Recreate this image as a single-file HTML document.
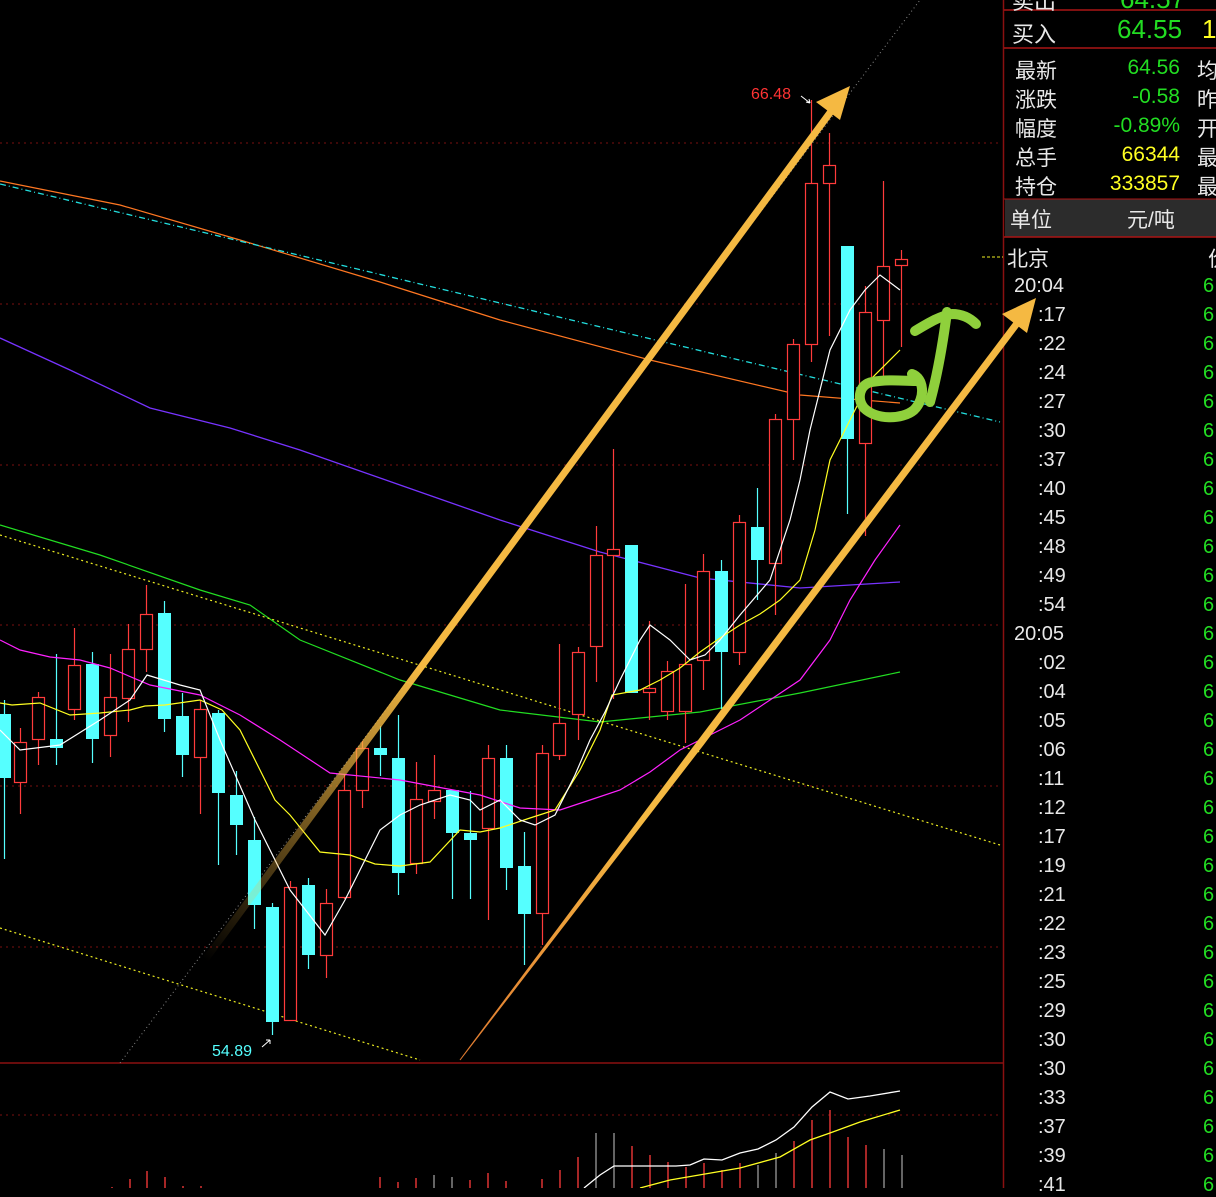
<!DOCTYPE html>
<html><head><meta charset="utf-8"><style>
html,body{margin:0;padding:0;background:#000;width:1216px;height:1188px;overflow:hidden}
svg{position:absolute;left:0;top:0}
.p{position:absolute;font-family:"Liberation Sans","Noto Sans CJK SC",sans-serif;white-space:nowrap}
.l{color:#e8e8e8;font-size:21px}
.v{font-size:21px;text-align:right;width:120px;left:1060px}
.g{color:#22dd22}.y{color:#ffff22}
.t{color:#e8e8e8;font-size:20px;left:1038px}
.s{color:#22dd22;font-size:20px;left:1203px}
</style></head><body>
<svg width="1216" height="1188" viewBox="0 0 1216 1188" xmlns="http://www.w3.org/2000/svg">
<g stroke="#7a1010" stroke-width="1" stroke-dasharray="2,4">
<line x1="0" y1="143" x2="1000" y2="143"/><line x1="0" y1="304" x2="1000" y2="304"/><line x1="0" y1="465" x2="1000" y2="465"/><line x1="0" y1="625" x2="1000" y2="625"/><line x1="0" y1="786" x2="1000" y2="786"/><line x1="0" y1="947" x2="1000" y2="947"/><line x1="0" y1="1115" x2="1000" y2="1115"/>
</g>
<line x1="0" y1="1063" x2="1003" y2="1063" stroke="#8a1010" stroke-width="1.5"/>
<line x1="1003.5" y1="0" x2="1003.5" y2="1188" stroke="#8a1010" stroke-width="1.5"/>
<line x1="120" y1="1063" x2="920" y2="0" stroke="#888" stroke-width="1" stroke-dasharray="1,3"/>
<polyline fill="none" stroke="#ff7722" stroke-width="1.2" points="0,181 120,205 240,240 380,282 500,320 650,360 800,395 900,403"/>
<line x1="0" y1="184" x2="1000" y2="422" stroke="#22dddd" stroke-width="1.3" stroke-dasharray="6,3,1,3"/>
<polyline fill="none" stroke="#7733ff" stroke-width="1.3" points="0,338 70,370 150,408 230,428 300,450 400,485 500,520 600,552 700,578 800,588 900,582"/>
<polyline fill="none" stroke="#22dd22" stroke-width="1.2" points="0,525 100,555 200,590 250,605 300,640 400,680 500,710 600,722 700,712 800,693 900,672"/>
<line x1="0" y1="535" x2="1000" y2="845" stroke="#eeee22" stroke-width="1.2" stroke-dasharray="2,3"/>
<line x1="0" y1="928" x2="420" y2="1060" stroke="#eeee22" stroke-width="1.2" stroke-dasharray="2,3"/>
<g id="c"></g>
<polyline fill="none" stroke="#ff22ff" stroke-width="1.2" points="0,640 20,650 50,657 80,660 110,668 150,685 200,695 240,715 280,740 330,773 400,780 480,795 520,808 560,810 590,800 620,790 650,772 680,750 710,735 740,720 770,700 800,680 830,640 850,600 875,560 900,525"/>
<polyline fill="none" stroke="#ffff22" stroke-width="1.2" points="0,703 12,705 40,703 70,715 100,713 130,710 145,706 165,705 200,700 222,710 240,730 275,800 290,815 320,852 350,855 375,864 400,866 430,862 460,830 480,832 500,828 530,818 555,810 580,770 600,730 612,695 640,690 660,680 680,668 700,652 720,638 740,625 760,614 780,600 800,580 815,530 830,460 850,420 870,380 900,350"/>
<polyline fill="none" stroke="#ffffff" stroke-width="1.2" points="0,730 20,750 60,745 100,720 130,700 147,675 180,685 200,690 220,740 255,820 290,890 325,935 345,900 365,860 380,830 400,815 420,805 450,795 470,800 480,810 500,800 520,820 535,825 555,815 575,775 590,740 605,712 620,680 640,640 650,625 670,640 690,660 705,655 720,640 740,615 770,580 790,520 800,480 810,430 820,390 830,350 850,310 865,290 880,275 900,290"/>
<g id="vol"></g>
<polyline fill="none" stroke="#ffffff" stroke-width="1.3" points="584,1188 600,1175 614,1166 676,1166 690,1165 704,1159 722,1160 740,1153 758,1149 776,1140 794,1127 812,1107 830,1092 848,1099 870,1096 900,1091"/>
<polyline fill="none" stroke="#ffff22" stroke-width="1.3" points="640,1188 670,1180 740,1168 780,1157 810,1140 830,1133 860,1122 900,1110"/>
<defs><linearGradient id="fa" x1="205" y1="960" x2="420" y2="670" gradientUnits="userSpaceOnUse"><stop offset="0" stop-color="#f5b942" stop-opacity="0"/><stop offset="1" stop-color="#f5b942"/></linearGradient>
<linearGradient id="fb" x1="460" y1="1060" x2="640" y2="820" gradientUnits="userSpaceOnUse"><stop offset="0" stop-color="#e07a30"/><stop offset="1" stop-color="#f5b942"/></linearGradient></defs>
<line x1="205" y1="960" x2="832" y2="110" stroke="url(#fa)" stroke-width="7"/>
<polygon points="850,86 840,120 816,102" fill="#f5b942"/>
<polygon points="460.4,1060.3 703.4,745.2 1020.8,324.1 1015.2,319.9 697.6,740.8 459.6,1059.7" fill="url(#fb)"/>
<polygon points="1036,298 1027,333 1002,314" fill="#f5b942"/>
<g fill="none" stroke="#8fd03c" stroke-width="10" stroke-linecap="round" stroke-linejoin="round">
<path d="M912,374 C924,378 926,398 914,410 C902,420 876,420 864,408 C856,398 860,384 872,382 C888,379 905,381 918,381"/>
<path d="M930,402 C936,380 942,350 947,312"/>
<path d="M915,331 C930,322 940,316 952,314 C962,314 970,318 976,324"/>
</g>
<text x="751" y="99" fill="#ff3333" font-family="Liberation Sans" font-size="16">66.48</text>
<path d="M801,96 L810,103 M810,103 L806,102 M810,103 L809,99" stroke="#fff" stroke-width="1" fill="none"/>
<text x="212" y="1056" fill="#55ffff" font-family="Liberation Sans" font-size="16">54.89</text>
<path d="M262,1047 L270,1040 M270,1040 L266,1040 M270,1040 L270,1044" stroke="#fff" stroke-width="1" fill="none"/>
<line x1="982" y1="257" x2="1003" y2="257" stroke="#eeee22" stroke-dasharray="3,2"/>
<line x1="1004" y1="10" x2="1216" y2="10" stroke="#aa1515" stroke-width="1.5"/>
<line x1="1004" y1="48" x2="1216" y2="48" stroke="#aa1515" stroke-width="1.5"/>
<rect x="1005" y="199" width="211" height="38" fill="#2c2c2c"/>
<line x1="1004" y1="199" x2="1216" y2="199" stroke="#aa1515" stroke-width="1"/>
<line x1="1004" y1="237" x2="1216" y2="237" stroke="#aa1515" stroke-width="1.5"/>
</svg>
<div class="p l" style="left:1012px;top:-16px;font-size:22px">卖出</div>
<div class="p g" style="left:1120px;top:-16px;font-size:26px">64.57</div>
<div class="p l" style="left:1012px;top:17px;font-size:22px">买入</div>
<div class="p g" style="left:1117px;top:14px;font-size:26px">64.55</div>
<div class="p y" style="left:1202px;top:14px;font-size:26px">1</div>
<div class="p l" style="left:1015px;top:55px">最新</div><div class="p v g" style="top:56px">64.56</div><div class="p l" style="left:1197px;top:55px">均</div>
<div class="p l" style="left:1015px;top:84px">涨跌</div><div class="p v g" style="top:85px">-0.58</div><div class="p l" style="left:1197px;top:84px">昨</div>
<div class="p l" style="left:1015px;top:113px">幅度</div><div class="p v g" style="top:114px">-0.89%</div><div class="p l" style="left:1197px;top:113px">开</div>
<div class="p l" style="left:1015px;top:142px">总手</div><div class="p v y" style="top:143px">66344</div><div class="p l" style="left:1197px;top:142px">最</div>
<div class="p l" style="left:1015px;top:171px">持仓</div><div class="p v y" style="top:172px">333857</div><div class="p l" style="left:1197px;top:171px">最</div>
<div class="p l" style="left:1010px;top:204px">单位</div><div class="p l" style="left:1127px;top:204px">元/吨</div>
<div class="p l" style="left:1007px;top:243px">北京</div><div class="p l" style="left:1208px;top:243px">价</div>
<div id="times"></div>
<script>
var C=[[4,'c',714,778,700,859],[20,'r',742,782,728,814],[38,'r',697,739,692,765],[56,'c',739,748,654,765],[74,'r',665,709,628,720],[92,'c',664,739,652,763],[110,'r',697,735,654,757],[128,'r',649,698,624,722],[146,'r',614,649,585,672],[164,'c',613,719,601,732],[182,'c',716,755,693,777],[200,'r',709,757,700,814],[218,'c',713,793,710,865],[236,'c',795,825,771,855],[254,'c',840,905,817,929],[272,'c',907,1022,903,1035],[290,'r',887,1020,881,1020],[308,'c',885,955,878,969],[326,'r',903,955,889,978],[344,'r',790,897,775,899],[362,'r',748,790,741,808],[380,'c',748,755,726,776],[398,'c',758,873,715,895],[416,'r',799,863,762,874],[434,'r',790,801,755,819],[452,'c',790,833,790,899],[470,'c',833,840,791,899],[488,'r',758,828,745,920],[506,'c',758,868,745,890],[524,'c',866,914,832,965],[542,'r',753,913,745,945],[559,'r',723,755,644,760],[578,'r',652,714,647,740],[596,'r',555,646,526,682],[613,'r',549,555,449,699],[631,'c',545,693,545,693],[649,'r',688,692,621,720],[667,'r',671,711,661,720],[685,'r',664,711,584,743],[703,'r',571,660,554,690],[721,'c',571,652,560,709],[739,'r',522,652,515,665],[757,'c',527,560,488,600],[775,'r',419,563,414,615],[793,'r',344,419,339,460],[811,'r',183,344,100,362],[829,'r',165,183,133,336],[847,'c',246,439,246,514],[865,'r',312,443,286,536],[883,'r',266,320,181,380],[901,'r',259,265,250,347]];
var s='';
C.forEach(function(d){var x=d[0],col=d[1]=='c'?'#55ffff':'#ff3b3b';
s+='<line x1="'+(x+.5)+'" y1="'+d[4]+'" x2="'+(x+.5)+'" y2="'+d[5]+'" stroke="'+col+'" stroke-width="1.2"/>';
if(d[1]=='c')s+='<rect x="'+(x-6)+'" y="'+d[2]+'" width="13" height="'+Math.max(d[3]-d[2],2)+'" fill="#55ffff"/>';
else s+='<rect x="'+(x-5.5)+'" y="'+(d[2]+.5)+'" width="12" height="'+Math.max(d[3]-d[2],3)+'" fill="#000" stroke="#ff3b3b" stroke-width="1.2"/>';});
document.getElementById('c').innerHTML=s;
var V=[[112,1187,'r'],[130,1179,'r'],[147,1171,'r'],[165,1177,'r'],[183,1186,'r'],[201,1186,'r'],[380,1177,'r'],[398,1182,'r'],[416,1178,'r'],[434,1175,'g'],[452,1177,'g'],[470,1180,'r'],[488,1173,'r'],[506,1181,'r'],[542,1179,'r'],[560,1170,'r'],[578,1157,'r'],[596,1133,'g'],[614,1133,'g'],[632,1146,'r'],[650,1155,'r'],[668,1162,'r'],[686,1167,'r'],[704,1163,'r'],[722,1170,'r'],[740,1163,'r'],[758,1165,'g'],[776,1153,'g'],[794,1141,'r'],[812,1120,'r'],[830,1110,'r'],[848,1137,'r'],[866,1145,'r'],[884,1149,'g'],[902,1155,'g']];
s='';V.forEach(function(v){s+='<line x1="'+v[0]+'" y1="'+v[1]+'" x2="'+v[0]+'" y2="1188" stroke="'+(v[2]=='r'?'#ff3b3b':'#999')+'" stroke-width="1.3"/>';});
document.getElementById('vol').innerHTML=s;
var T=['20:04',':17',':22',':24',':27',':30',':37',':40',':45',':48',':49',':54','20:05',':02',':04',':05',':06',':11',':12',':17',':19',':21',':22',':23',':25',':29',':30',':30',':33',':37',':39',':41'];
s='';T.forEach(function(t,i){var y=275+i*29;s+='<div class="p t" style="top:'+y+'px;'+(t.length>3?'left:1014px':'')+'">'+t+'</div><div class="p s" style="top:'+y+'px">6</div>';});
document.getElementById('times').innerHTML=s;
</script>
</body></html>
